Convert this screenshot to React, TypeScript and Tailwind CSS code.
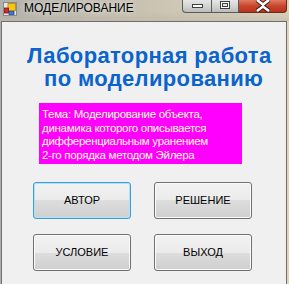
import React from "react";

const font = { fontFamily: '"Liberation Sans", Arial, sans-serif' };

function AppIcon() {
  return (
    <svg width="14" height="14" viewBox="0 0 14 14">
      <rect x="0.5" y="0.5" width="13" height="13" fill="#e8e8e8" stroke="#8a8a8a" />
      <rect x="5" y="1.5" width="7.5" height="7" fill="#f5c518" stroke="#b08000" strokeWidth="0.8" />
      <rect x="1.5" y="6" width="4" height="5" fill="#d42a1e" stroke="#8a1010" strokeWidth="0.8" />
      <rect x="6" y="9.5" width="5" height="3" fill="#3a7be0" stroke="#1a4aa0" strokeWidth="0.8" />
    </svg>
  );
}

function CaptionButtons() {
  return (
    <div className="flex self-start h-[13px]">
      {/* minimize */}
      <div className="w-[30px] h-full border border-t-0 border-[#5a5a5a] rounded-bl-[4px] bg-gradient-to-b from-[#e6e6e6] via-[#d4d4d4] to-[#bcbcbc] flex items-start justify-center pt-[4px]">
        <div className="w-[11px] h-[4px] bg-white border border-[#404040]" />
      </div>
      {/* maximize */}
      <div className="w-[27px] h-full border border-t-0 border-l-0 border-[#5a5a5a] bg-gradient-to-b from-[#e6e6e6] via-[#d4d4d4] to-[#bcbcbc] flex items-start justify-center pt-[1px]">
        <div className="w-[10px] h-[8px] border border-[#404040] bg-white p-[1px]">
          <div className="w-full h-full border border-[#404040] bg-[#e6e6e6]" />
        </div>
      </div>
      {/* close */}
      <div className="w-[48px] h-full border border-t-0 border-l-0 border-[#6a2a1a] rounded-br-[4px] bg-gradient-to-b from-[#e07a62] via-[#c8452c] to-[#b8341c] flex items-start justify-center">
        <svg width="16" height="12" viewBox="0 0 16 12">
          <path d="M2 0 L8 4.5 L14 0 M2 11 L8 6.5 L14 11" stroke="#3a1a10" strokeWidth="4.5" fill="none" />
          <path d="M2 0 L8 4.5 L14 0 M2 11 L8 6.5 L14 11" stroke="#ffffff" strokeWidth="2.6" fill="none" />
        </svg>
      </div>
    </div>
  );
}

function WinButton({ label, focused }: { label: string; focused?: boolean }) {
  return (
    <button
      className={`h-[37px] rounded-[3px] border text-[11px] text-black flex items-center justify-center bg-[linear-gradient(to_bottom,#f2f2f2_0%,#ebebeb_50%,#dddddd_50%,#cfcfcf_100%)] ${
        focused
          ? "border-[#3c9fd6] shadow-[inset_0_0_0_1px_#a8e4ff]"
          : "border-[#707070] shadow-[inset_0_0_0_1px_#fbfbfb]"
      }`}
      style={font}
    >
      {label}
    </button>
  );
}

export default function App() {
  return (
    <div
      className="w-[289px] h-[284px] overflow-hidden flex flex-col bg-gradient-to-r from-[#b0b0ac] via-[#cac3b2] to-[#dcd5c2]"
      style={font}
    >
      {/* title bar */}
      <div className="h-[21px] flex items-start shrink-0 bg-gradient-to-b from-transparent via-transparent to-[#bdb7a6]/60">
        <div className="pl-[3px] pt-[2px]">
          <AppIcon />
        </div>
        <span className="ml-[7px] mt-[1px] text-[12px] leading-[14px] text-black [text-shadow:0_0_6px_rgba(255,255,255,0.95)]">
          МОДЕЛИРОВАНИЕ
        </span>
        <div className="flex-1" />
        <div className="mr-[2px]">
          <CaptionButtons />
        </div>
      </div>

      {/* client area */}
      <div className="flex-1 ml-[1px] mr-[2px] border border-b-0 border-[#6e6e6e] bg-[#f0f0f0]">
        <div className="pt-[22px] pl-[25px] font-bold text-[22px] tracking-[0.35px] leading-[23px] text-[#0a64cc]">
          <div>Лабораторная работа</div>
          <div className="pl-[17px]">по моделированию</div>
        </div>

        <div className="mt-[13px] ml-[37px] w-[203px] h-[61px] bg-[#ff00ff] pl-[3px] pt-[5px] text-[11.5px] tracking-[-0.3px] leading-[13.7px] text-[#ffffd8]">
          Тема: Моделирование объекта,
          <br />
          динамика которого описывается
          <br />
          дифференциальным уранением
          <br />
          2-го порядка методом Эйлера
        </div>

        <div className="mt-[18px] ml-[31px] grid grid-cols-[98px_98px] gap-x-[23px] gap-y-[15px]">
          <WinButton label="АВТОР" focused />
          <WinButton label="РЕШЕНИЕ" />
          <WinButton label="УСЛОВИЕ" />
          <WinButton label="ВЫХОД" />
        </div>
      </div>
    </div>
  );
}
